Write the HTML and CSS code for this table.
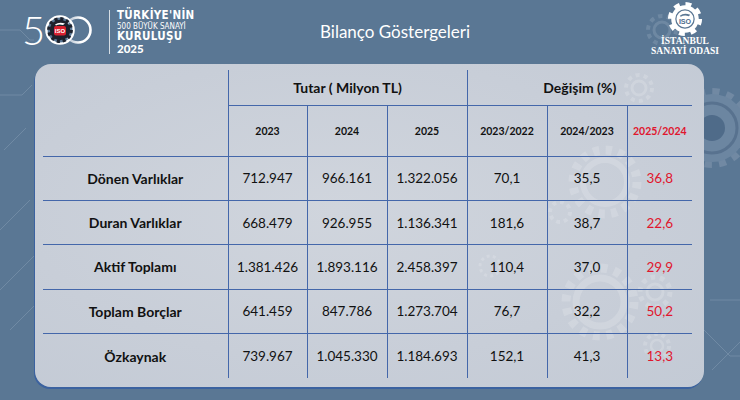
FILE: index.html
```html
<!DOCTYPE html>
<html lang="tr">
<head>
<meta charset="utf-8">
<title>Bilanço Göstergeleri</title>
<link rel="stylesheet" href="styles.css">
</head>
<body>
<svg class="bg-deco" viewBox="0 0 740 400" aria-hidden="true">
  <g class="circuit" fill="none" stroke="#a9bdd0" stroke-width="0.8" opacity="0.35">
    <path d="M0 30 H20 L30 40 H34"/>
    <path d="M0 95 H22 L32 85"/>
    <path d="M4 150 L26 128"/>
    <path d="M0 230 L30 200"/>
    <path d="M0 290 L34 256"/>
    <path d="M10 330 L34 306"/>
    <path d="M710 300 H740"/>
    <path d="M704 330 L730 356 H740"/>
    <path d="M712 370 L740 342"/>
  </g>
  <g class="biggear">
    <circle cx="712" cy="128" r="36" fill="none" stroke="#7189a3" stroke-width="8" stroke-dasharray="7.07 7.07"/>
    <circle cx="712" cy="128" r="34" fill="#6c86a1"/>
    <circle cx="712" cy="128" r="25" fill="none" stroke="#58728f" stroke-width="3"/>
    <circle cx="712" cy="128" r="13" fill="#4f6b89"/>
  </g>
  <g opacity="0.18">
    <circle cx="662" cy="30" r="14" fill="none" stroke="#c9d6e3" stroke-width="4" stroke-dasharray="4.4 4.4"/>
    <circle cx="662" cy="30" r="8" fill="none" stroke="#c9d6e3" stroke-width="3"/>
  </g>
</svg>

<header class="top">
  <div class="brand500">
    <span class="five">5</span>
    <svg class="mark500" viewBox="23 0 63 46" aria-hidden="true">
      <defs>
        <linearGradient id="ring2" x1="0" y1="0" x2="1" y2="0">
          <stop offset="0" stop-color="#9fb0c2"/>
          <stop offset="0.6" stop-color="#ffffff"/>
        </linearGradient>
      </defs>
      <circle cx="56" cy="22" r="12.5" fill="none" stroke="url(#ring2)" stroke-width="2.6"/>
      <circle cx="38" cy="22" r="13.6" fill="none" stroke="#ffffff" stroke-width="2.4"/>
      <circle cx="38" cy="22" r="11.2" fill="none" stroke="#1c212c" stroke-width="3.4" stroke-dasharray="3.1 2.76"/>
      <circle cx="38" cy="22" r="10.2" fill="#1c212c"/>
      <path d="M33 16.5 Q37 13.5 43 15.5 L41 17 Q37 15.8 34 17.5 Z" fill="#ffffff"/>
      <rect x="32" y="18" width="12" height="9.5" rx="2" fill="#d8202e"/>
      <text x="38" y="25.4" class="isosmall">ISO</text>
    </svg>
    <div class="brand-text">
      <span class="bt1">TÜRKİYE'NİN</span>
      <span class="bt2">500 BÜYÜK SANAYİ</span>
      <span class="bt3">KURULUŞU</span>
      <span class="bt4">2025</span>
    </div>
  </div>
  <h1 class="title">Bilanço Göstergeleri</h1>
  <div class="iso">
    <svg class="iso-gear" viewBox="0 0 40 40" aria-hidden="true">
      <circle cx="20" cy="20" r="15.5" fill="none" stroke="#ffffff" stroke-width="5" stroke-dasharray="6.09 6.09"/>
      <circle cx="20" cy="20" r="14.5" fill="#ffffff"/>
      <circle cx="20" cy="20" r="9.6" fill="none" stroke="#5a7794" stroke-width="1.3"/>
      <path d="M14.5 16.5 Q19 13 25.5 15.5 L24 17 Q19.5 15.5 15.5 17.5 Z" fill="#5a7794"/>
      <text x="20" y="25" class="isotext">ISO</text>
    </svg>
    <div class="iso-name">İSTANBUL<br>SANAYİ ODASI</div>
  </div>
</header>

<main class="panel">
  <svg class="panel-deco" viewBox="0 0 669 323" aria-hidden="true">
    <g fill="none" stroke="#ffffff" opacity="0.16">
      <circle cx="604" cy="24" r="13" stroke-width="4" stroke-dasharray="4.1 4.1"/>
      <circle cx="604" cy="24" r="7" stroke-width="3"/>
      <circle cx="570" cy="118" r="32" stroke-width="9" stroke-dasharray="6.3 6.3"/>
      <circle cx="570" cy="118" r="22" stroke-width="6"/>
      <circle cx="525" cy="148" r="10" stroke-width="4" stroke-dasharray="3.9 3.9"/>
      <circle cx="565" cy="238" r="34" stroke-width="9" stroke-dasharray="6.7 6.7"/>
      <circle cx="565" cy="238" r="24" stroke-width="7"/>
      <circle cx="620" cy="228" r="15" stroke-width="5" stroke-dasharray="4.7 4.7"/>
      <circle cx="620" cy="228" r="8" stroke-width="3"/>
      <circle cx="622" cy="282" r="12" stroke-width="4" stroke-dasharray="3.8 3.8"/>
      <circle cx="622" cy="282" r="6" stroke-width="2.5"/>
      <circle cx="455" cy="202" r="10" stroke-width="3" stroke-dasharray="3.1 3.1"/>
    </g>
  </svg>
  <table class="data">
    <colgroup>
      <col class="c-label">
      <col class="c-a">
      <col class="c-b">
      <col class="c-b">
      <col class="c-b">
      <col class="c-b">
      <col class="c-last">
    </colgroup>
    <thead>
      <tr class="hrow1">
        <th rowspan="2" class="blank"></th>
        <th colspan="3" class="group">Tutar ( Milyon TL)</th>
        <th colspan="3" class="group">Değişim (%)</th>
      </tr>
      <tr class="hrow2">
        <th>2023</th>
        <th>2024</th>
        <th>2025</th>
        <th>2023/2022</th>
        <th>2024/2023</th>
        <th class="red">2025/2024</th>
      </tr>
    </thead>
    <tbody>
      <tr>
        <th>Dönen Varlıklar</th>
        <td>712.947</td><td>966.161</td><td>1.322.056</td>
        <td>70,1</td><td>35,5</td><td class="red">36,8</td>
      </tr>
      <tr>
        <th>Duran Varlıklar</th>
        <td>668.479</td><td>926.955</td><td>1.136.341</td>
        <td>181,6</td><td>38,7</td><td class="red">22,6</td>
      </tr>
      <tr>
        <th>Aktif Toplamı</th>
        <td>1.381.426</td><td>1.893.116</td><td>2.458.397</td>
        <td>110,4</td><td>37,0</td><td class="red">29,9</td>
      </tr>
      <tr>
        <th>Toplam Borçlar</th>
        <td>641.459</td><td>847.786</td><td>1.273.704</td>
        <td>76,7</td><td>32,2</td><td class="red">50,2</td>
      </tr>
      <tr>
        <th>Özkaynak</th>
        <td>739.967</td><td>1.045.330</td><td>1.184.693</td>
        <td>152,1</td><td>41,3</td><td class="red">13,3</td>
      </tr>
    </tbody>
  </table>
</main>
</body>
</html>
```

FILE: styles.css
```css
* { box-sizing: border-box; }

html, body {
  margin: 0;
  padding: 0;
}

body {
  width: 740px;
  height: 400px;
  overflow: hidden;
  position: relative;
  background: #5a7794;
  font-family: Lato, "Noto Sans", sans-serif;
  color: #111;
}

.bg-deco {
  position: absolute;
  left: 0;
  top: 0;
  width: 740px;
  height: 400px;
}

/* ---------- header ---------- */
.top {
  position: relative;
  display: flex;
  height: 64px;
  padding-left: 22px;
}

.brand500 {
  width: 298px;
  display: flex;
  align-items: flex-start;
  padding-top: 8px;
}

.five {
  display: block;
  width: 23px;
  margin-top: -1.5px;
  font-family: Lato, sans-serif;
  font-weight: 300;
  font-size: 40px;
  line-height: 46px;
  color: #ffffff;
}

.mark500 {
  display: block;
  width: 63px;
  height: 46px;
}

.isosmall {
  font-family: "Liberation Sans", sans-serif;
  font-weight: 700;
  font-size: 6px;
  fill: #ffffff;
  text-anchor: middle;
}

.brand-text {
  margin-left: 1px;
  margin-top: 2px;
  height: 44px;
  border-left: 1.5px solid rgba(255, 255, 255, 0.75);
  padding-left: 7px;
  color: #ffffff;
  font-family: "Liberation Sans Narrow", "DejaVu Sans Condensed", sans-serif;
  font-weight: 700;
  display: flex;
  flex-direction: column;
  white-space: nowrap;
}

.bt1 { font-size: 11.5px; line-height: 11.5px; letter-spacing: 0.3px; }
.bt2 { font-size: 8px; line-height: 9.5px; font-weight: 400; }
.bt3 { font-size: 11.5px; line-height: 11.5px; letter-spacing: 0.3px; }
.bt4 { font-size: 11.5px; line-height: 11.5px; font-family: Lato, sans-serif; font-weight: 900; }

.title {
  margin: 0;
  font-weight: 400;
  font-size: 17px;
  line-height: 64px;
  color: #ffffff;
  white-space: nowrap;
}

.iso {
  margin-left: auto;
  margin-right: 15px;
  width: 80px;
  display: flex;
  flex-direction: column;
  align-items: center;
}

.iso-gear {
  display: block;
  width: 38px;
  height: 38px;
}

.isotext {
  font-family: "Liberation Sans", sans-serif;
  font-weight: 700;
  font-size: 7.5px;
  fill: #4e6d8e;
  text-anchor: middle;
}

.iso-name {
  margin-top: -2px;
  font-family: "Liberation Serif", serif;
  font-weight: 700;
  font-size: 9.5px;
  line-height: 10px;
  text-align: center;
  color: #ffffff;
  white-space: nowrap;
}

/* ---------- panel ---------- */
.panel {
  position: relative;
  display: block;
  margin: 0 36px 0 35px;
  padding: 6px 12px 9px 8px;
  border-radius: 16px;
  background: radial-gradient(ellipse at 45% 45%, #d0d5dd 0%, #c8ced8 60%, #c3cad5 100%);
  box-shadow: -1px 2px 0 #3b62a0;
}

.panel-deco {
  position: absolute;
  left: 0;
  top: 0;
  width: 669px;
  height: 323px;
}

.data {
  position: relative;
  width: 649px;
  border-collapse: collapse;
  table-layout: fixed;
}

.c-label { width: 185px; }
.c-a { width: 79px; }
.c-b { width: 80px; }
.c-last { width: 65px; }

.data th,
.data td {
  padding: 0;
  text-align: center;
  vertical-align: middle;
  border-right: 1px solid #4467aa;
  border-bottom: 1px solid #4467aa;
  white-space: nowrap;
}

.data tr > *:last-child {
  border-right: none;
}

.data tbody tr:last-child > * {
  border-bottom: none;
}

.hrow1 { height: 35px; }
.hrow2 { height: 51px; }
.data tbody tr { height: 44.4px; }

.group {
  font-size: 14px;
  font-weight: 700;
  padding-top: 2px;
}

.hrow2 th {
  font-size: 10.5px;
  font-weight: 700;
}

.data tbody th {
  font-size: 14px;
  font-weight: 700;
}

.data tbody td {
  font-size: 13.5px;
  font-weight: 400;
}

.data .red {
  color: #e0162e;
}
```
